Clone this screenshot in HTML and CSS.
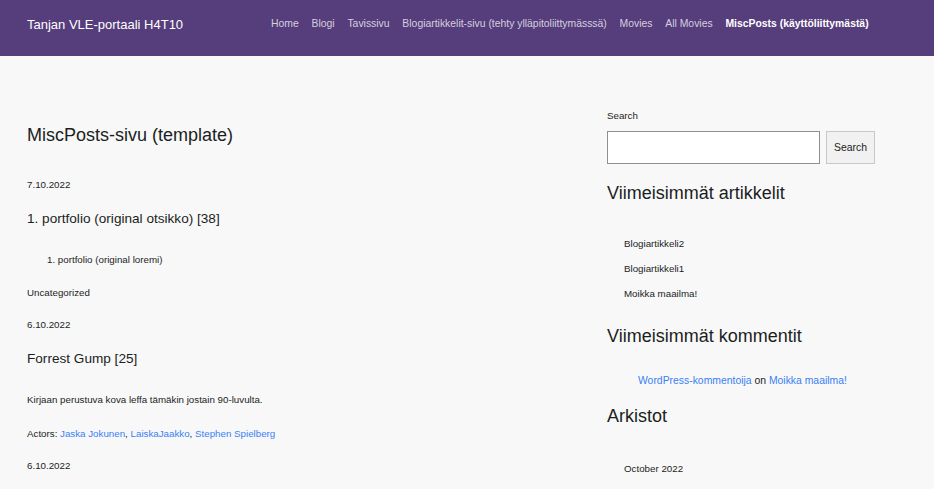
FILE: index.html
```html
<!DOCTYPE html>
<html lang="fi">
<head>
<meta charset="utf-8">
<title>Tanjan VLE-portaali H4T10</title>
<link rel="stylesheet" href="styles.css">
</head>
<body>
<header class="topbar">
  <div class="topbar-inner">
    <a class="brand" href="#">Tanjan VLE-portaali H4T10</a>
    <nav class="nav">
      <a href="#">Home</a>
      <a href="#">Blogi</a>
      <a href="#">Tavissivu</a>
      <a href="#">Blogiartikkelit-sivu (tehty ylläpitoliittymässsä)</a>
      <a href="#">Movies</a>
      <a href="#">All Movies</a>
      <a class="active" href="#">MiscPosts (käyttöliittymästä)</a>
    </nav>
  </div>
</header>
<div class="page">
  <main class="main">
    <h2 class="page-title">MiscPosts-sivu (template)</h2>

    <article class="post">
      <div class="date">7.10.2022</div>
      <h3 class="post-title">1. portfolio (original otsikko) [38]</h3>
      <ol class="post-list"><li>portfolio (original loremi)</li></ol>
      <div class="meta">Uncategorized</div>
    </article>

    <article class="post">
      <div class="date">6.10.2022</div>
      <h3 class="post-title">Forrest Gump [25]</h3>
      <p class="post-text">Kirjaan perustuva kova leffa tämäkin jostain 90-luvulta.</p>
      <div class="meta">Actors: <a href="#">Jaska Jokunen</a>, <a href="#">LaiskaJaakko</a>, <a href="#">Stephen Spielberg</a></div>
    </article>

    <article class="post">
      <div class="date">6.10.2022</div>
    </article>
  </main>

  <aside class="sidebar">
    <form class="search">
      <label class="search-label">Search</label>
      <div class="search-row">
        <input class="search-input" type="text">
        <button class="search-btn" type="button">Search</button>
      </div>
    </form>

    <h2 class="widget-title w-recent">Viimeisimmät artikkelit</h2>
    <ul class="widget-list">
      <li>Blogiartikkeli2</li>
      <li>Blogiartikkeli1</li>
      <li>Moikka maailma!</li>
    </ul>

    <h2 class="widget-title w-comments">Viimeisimmät kommentit</h2>
    <ul class="comment-list">
      <li><a href="#">WordPress-kommentoija</a> on <a href="#">Moikka maailma!</a></li>
    </ul>

    <h2 class="widget-title w-archive">Arkistot</h2>
    <ul class="widget-list archive-list">
      <li>October 2022</li>
    </ul>
  </aside>
</div>
</body>
</html>
```
FILE: styles.css
```css
* { box-sizing: border-box; }
html, body { margin: 0; padding: 0; }
body {
  background: #f8f8f9;
  color: #1b1e21;
  font-family: "Liberation Sans", Arial, sans-serif;
  overflow: hidden;
}
a { text-decoration: none; }

.topbar {
  background: #563d7c;
  height: 56px;
}
.topbar-inner {
  width: 875px;
  padding-left: 27px;
  height: 50px;
  display: flex;
  align-items: center;
  justify-content: space-between;
}
.brand {
  color: #fff;
  font-size: 13px;
  line-height: 16px;
}
.nav {
  display: flex;
  margin-top: -2px;
}
.nav a {
  color: rgba(255,255,255,0.76);
  font-size: 10.4px;
  line-height: 14px;
  padding: 0 6.4px;
}
.nav a.active {
  color: #fff;
  font-weight: bold;
}

.page {
  width: 875px;
  padding-left: 27px;
  display: grid;
  grid-template-columns: 1fr 268px;
  column-gap: 12px;
}

.main { padding-top: 68px; }
.page-title {
  margin: 0 0 32px;
  font-size: 18px;
  line-height: 22px;
  font-weight: normal;
}
.date, .meta, .post-text, .post-list {
  font-size: 9.75px;
  line-height: 14px;
}
.date { margin-bottom: 18px; }
.post-title {
  margin: 0 0 25px;
  font-size: 13.6px;
  line-height: 18px;
  font-weight: normal;
}
.post-list {
  margin: 0 0 19px;
  padding-left: 20px;
  list-style-position: inside;
}
.post-text { margin: 0 0 20px; }
.meta { margin-bottom: 18px; }
.meta a { color: #3a80f5; }

.sidebar { padding-top: 53px; }
.search-label {
  display: block;
  font-size: 9.75px;
  line-height: 14px;
  margin-bottom: 8px;
}
.search-row {
  display: flex;
  gap: 6px;
}
.search-input {
  width: 213px;
  height: 33px;
  border: 1px solid #8f8f8f;
  background: #fff;
  margin: 0;
}
.search-btn {
  width: 49px;
  height: 33px;
  border: 1px solid #c8c8c8;
  background: #f1f1f1;
  color: #222;
  font-family: "Liberation Sans", Arial, sans-serif;
  font-size: 10.4px;
  padding: 0;
  margin: 0;
}
.widget-title {
  font-size: 18px;
  line-height: 22px;
  font-weight: normal;
  margin: 0;
}
.w-recent { margin-top: 18px; margin-bottom: 33px; }
.w-comments { margin-top: 24px; margin-bottom: 27px; }
.w-archive { margin-top: 17px; margin-bottom: 35px; }
.widget-list {
  list-style: none;
  margin: 0;
  padding-left: 17px;
  font-size: 9.75px;
  line-height: 14px;
}
.widget-list li { margin-bottom: 11px; }
.widget-list li:last-child { margin-bottom: 0; }
.comment-list {
  list-style: none;
  margin: 0;
  padding-left: 31px;
  font-size: 10.4px;
  line-height: 14px;
}
.comment-list a { color: #3a80f5; }
```
